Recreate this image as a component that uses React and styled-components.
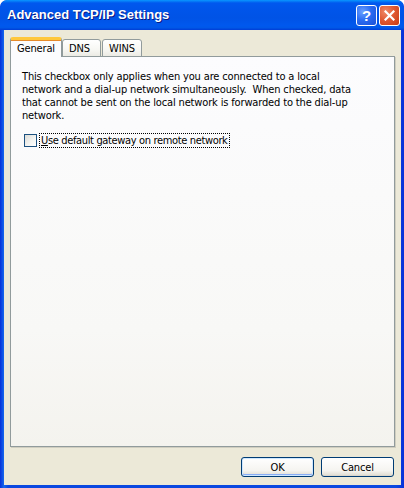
import React from 'react';
import styled, { createGlobalStyle } from 'styled-components';

const GlobalStyle = createGlobalStyle`
  html, body {
    margin: 0;
    padding: 0;
    background: #ffffff;
  }
  * {
    box-sizing: border-box;
  }
`;

const Frame = styled.div`
  width: 404px;
  height: 488px;
  display: flex;
  flex-direction: column;
  background: linear-gradient(to right, #0831d9 0%, #166aee 1%, #0a48e0 2%, #0a48e0 98%, #0831d9 100%);
  border-radius: 7px 7px 0 0;
  padding: 0 3px 3px 4px;
  font-family: 'DejaVu Sans Condensed', 'DejaVu Sans', sans-serif;
  letter-spacing: -0.15px;
  overflow: hidden;
`;

const TitleBar = styled.div`
  height: 30px;
  margin: 0 -3px 0 -4px;
  padding: 0 4px 0 7px;
  display: flex;
  align-items: center;
  justify-content: space-between;
  border-radius: 7px 7px 0 0;
  background: linear-gradient(
    to bottom,
    #0997ff 0%,
    #0058ee 10%,
    #0055ea 30%,
    #0053e6 60%,
    #0058ee 85%,
    #0058e8 92%,
    #003dd6 100%
  );
`;

const Title = styled.div`
  color: #ffffff;
  font-family: 'Liberation Sans', sans-serif;
  font-weight: bold;
  font-size: 13px;
  letter-spacing: 0;
  text-shadow: 1px 1px #0a1883;
  padding-bottom: 1px;
`;

const TitleButtons = styled.div`
  display: flex;
  gap: 2px;
  padding-top: 1px;
`;

const CaptionButton = styled.div`
  width: 21px;
  height: 21px;
  border: 1px solid #ffffff;
  border-radius: 3px;
  display: grid;
  place-items: center;
  color: #ffffff;
  font-family: 'Liberation Sans', sans-serif;
  font-weight: bold;
  font-size: 15px;
  background: ${p =>
    p.danger
      ? 'radial-gradient(circle at 30% 30%, #f08a68 0%, #e05a34 45%, #c83a12 100%)'
      : 'radial-gradient(circle at 30% 30%, #6aa0ff 0%, #2a6cf2 45%, #1a50d6 100%)'};
`;

const Body = styled.div`
  flex: 1;
  display: flex;
  flex-direction: column;
  background: #ece9d8;
  padding: 7px 6px 0 6px;
`;

const TabStrip = styled.div`
  display: flex;
  align-items: flex-end;
  height: 20px;
  position: relative;
  z-index: 1;
  margin-bottom: -1px;
`;

const Tab = styled.div`
  width: ${p => p.w}px;
  height: ${p => (p.active ? '20px' : '18px')};
  padding: 0 0 0 6px;
  margin-right: ${p => (p.active ? '0' : '1px')};
  display: flex;
  align-items: center;
  font-size: 11px;
  color: #000000;
  border: 1px solid #919b9c;
  border-bottom: ${p => (p.active ? 'none' : '1px solid #919b9c')};
  border-top: ${p => (p.active ? '3px solid #ffc83c' : '1px solid #919b9c')};
  border-radius: 3px 3px 0 0;
  padding-top: ${p => (p.active ? '0' : '1px')};
  background: ${p =>
    p.active ? '#fcfcfe' : 'linear-gradient(to bottom, #ffffff 0%, #f7f7f3 60%, #ecebe4 100%)'};
  box-shadow: ${p => (p.active ? 'inset 0 1px 0 #e68b2c' : 'none')};
`;

const Panel = styled.div`
  height: 391px;
  border: 1px solid #919b9c;
  background: linear-gradient(to bottom, #fcfcfe 0%, #f8f8f6 70%, #f4f3ee 100%);
  padding: 13px 11px;
  box-shadow: 1px 1px 0 #d0cec0;
`;

const Note = styled.p`
  margin: 0;
  font-size: 11px;
  line-height: 13px;
  color: #000000;
  white-space: nowrap;
`;

const CheckRow = styled.label`
  display: flex;
  align-items: center;
  gap: 3px;
  margin-top: 12px;
  margin-left: 2px;
  font-size: 11px;
  color: #000000;
`;

const CheckBox = styled.span`
  width: 13px;
  height: 13px;
  border: 1px solid #1c5180;
  background: linear-gradient(135deg, #dcdcd7 0%, #f5f5f2 60%, #ffffff 100%);
`;

const FocusLabel = styled.span`
  outline: 1px dotted #000000;
  padding: 0 1px;
  line-height: 13px;
  letter-spacing: -0.35px;
  u {
    text-decoration: underline;
  }
`;

const ButtonRow = styled.div`
  display: flex;
  justify-content: flex-end;
  gap: 7px;
  padding: 10px 1px 0 0;
`;

const Button = styled.div`
  width: 73px;
  height: 20px;
  border: 1px solid #003c74;
  border-radius: 3px;
  display: grid;
  place-items: center;
  font-size: 11px;
  color: #000000;
  background: linear-gradient(to bottom, #ffffff 0%, #f5f4f0 70%, #e3e1d8 92%, #d6d0c5 100%);
  box-shadow: ${p => (p.primary ? 'inset 0 0 0 1px #cee7ff, inset 0 -1px 0 1px #89adf5' : 'none')};
`;

export default function App() {
  return (
    <>
      <GlobalStyle />
      <Frame>
        <TitleBar>
          <Title>Advanced TCP/IP Settings</Title>
          <TitleButtons>
            <CaptionButton>?</CaptionButton>
            <CaptionButton danger>
              <svg width="11" height="11" viewBox="0 0 11 11">
                <path d="M1.5 1.5 L9.5 9.5 M9.5 1.5 L1.5 9.5" stroke="#fff" strokeWidth="2.2" strokeLinecap="square" />
              </svg>
            </CaptionButton>
          </TitleButtons>
        </TitleBar>
        <Body>
          <TabStrip>
            <Tab active w={52}>General</Tab>
            <Tab w={39}>DNS</Tab>
            <Tab w={40}>WINS</Tab>
          </TabStrip>
          <Panel>
            <Note>
              This checkbox only applies when you are connected to a local
              <br />
              network and a dial-up network simultaneously.&nbsp; When checked, data
              <br />
              that cannot be sent on the local network is forwarded to the dial-up
              <br />
              network.
            </Note>
            <CheckRow>
              <CheckBox />
              <FocusLabel>
                <u>U</u>se default gateway on remote network
              </FocusLabel>
            </CheckRow>
          </Panel>
          <ButtonRow>
            <Button primary>OK</Button>
            <Button>Cancel</Button>
          </ButtonRow>
        </Body>
      </Frame>
    </>
  );
}
